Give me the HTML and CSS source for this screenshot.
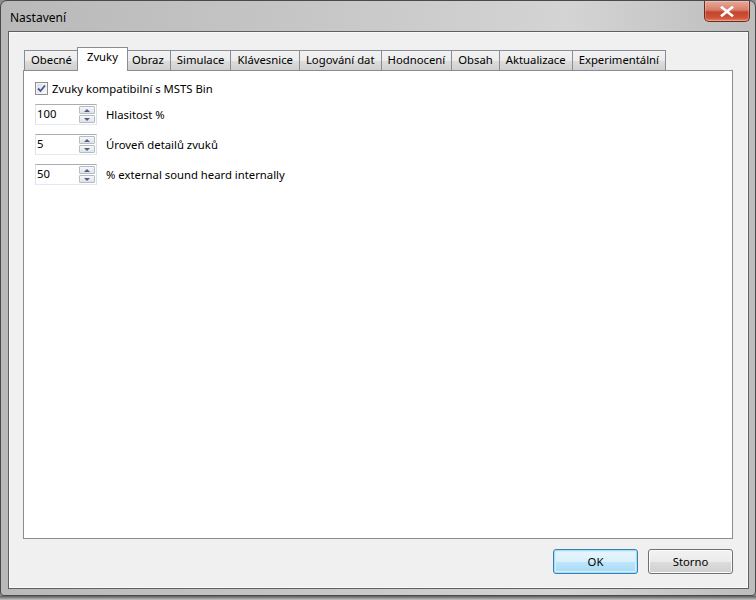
FILE: index.html
```html
<!DOCTYPE html>
<html lang="cs">
<head>
<meta charset="utf-8">
<title>Nastavení</title>
<link rel="stylesheet" href="styles.css">
</head>
<body>
<div class="window">
  <div class="titlebar">
    <span class="title">Nastavení</span>
    <div class="close" aria-label="Zavřít">
      <svg width="14" height="11" viewBox="0 0 14 11"><path d="M2 1.5 L12 9.5 M12 1.5 L2 9.5" stroke="#fff" stroke-width="2.6" stroke-linecap="square"/><path d="M2 1.5 L12 9.5 M12 1.5 L2 9.5" stroke="#fff" stroke-width="1.2"/></svg>
    </div>
  </div>
  <div class="client">
    <div class="tabcontrol">
      <div class="tabs">
        <div class="tab">Obecné</div>
        <div class="tab active">Zvuky</div>
        <div class="tab">Obraz</div>
        <div class="tab">Simulace</div>
        <div class="tab">Klávesnice</div>
        <div class="tab">Logování dat</div>
        <div class="tab">Hodnocení</div>
        <div class="tab">Obsah</div>
        <div class="tab">Aktualizace</div>
        <div class="tab">Experimentální</div>
      </div>
      <div class="panel">
        <label class="check-row">
          <span class="checkbox">
            <svg width="9" height="9" viewBox="0 0 9 9"><path d="M1 4.5 L3.5 7 L8 1.5" fill="none" stroke="#3c5a9a" stroke-width="1.8"/></svg>
          </span>
          <span>Zvuky kompatibilní s MSTS Bin</span>
        </label>
        <div class="num-row">
          <div class="spinner"><span class="value">100</span><span class="spin"><span class="up"></span><span class="down"></span></span></div>
          <span class="label">Hlasitost %</span>
        </div>
        <div class="num-row">
          <div class="spinner"><span class="value">5</span><span class="spin"><span class="up"></span><span class="down"></span></span></div>
          <span class="label">Úroveň detailů zvuků</span>
        </div>
        <div class="num-row">
          <div class="spinner"><span class="value">50</span><span class="spin"><span class="up"></span><span class="down"></span></span></div>
          <span class="label">% external sound heard internally</span>
        </div>
      </div>
    </div>
    <div class="buttons">
      <button class="btn default">OK</button>
      <button class="btn">Storno</button>
    </div>
  </div>
</div>
<div class="behind"></div>
</body>
</html>
```
FILE: styles.css
```css
html, body {
  margin: 0;
  padding: 0;
}
body {
  width: 756px;
  height: 600px;
  overflow: hidden;
  background: #8d8d8d;
  font-family: "Noto Sans", "Open Sans", sans-serif;
  font-size: 11.3px;
  color: #000;
}
.window {
  box-sizing: border-box;
  width: 756px;
  height: 596px;
  border: 1px solid #4a4a4a;
  border-radius: 7px 7px 4px 4px;
  background: linear-gradient(to right, #b9b9b9 0%, #c6c6c6 40%, #d4d4d4 75%, #bdbdbd 100%);
  display: flex;
  flex-direction: column;
  padding: 0 6px 6px 7px;
}
.titlebar {
  height: 30px;
  display: flex;
  align-items: flex-start;
  justify-content: space-between;
}
.title {
  margin-top: 8px;
  margin-left: 2px;
  font-size: 12px;
}
.close {
  width: 46px;
  height: 21px;
  margin-right: -1px;
  box-sizing: border-box;
  border: 1px solid #6a2a1e;
  border-top: none;
  border-radius: 0 0 5px 5px;
  background: linear-gradient(to bottom, #e7a999 0%, #d77d6a 45%, #c4452e 55%, #d0533b 85%, #e58a6a 100%);
  display: flex;
  align-items: center;
  justify-content: center;
  box-shadow: inset 0 0 0 1px rgba(255,255,255,0.25);
}
.client {
  flex: 1;
  box-sizing: border-box;
  border: 1px solid #5f5f5f;
  background: #f0f0f0;
  padding: 15px 15px 0 14px;
  display: flex;
  flex-direction: column;
  box-shadow: inset 0 0 0 1px #fafafa;
}
.tabcontrol {
  display: flex;
  flex-direction: column;
  height: 492px;
}
.tabs {
  display: flex;
  align-items: flex-end;
  height: 23px;
  padding-left: 1px;
  position: relative;
  z-index: 1;
}
.tab {
  height: 20px;
  box-sizing: border-box;
  border: 1px solid #898c95;
  border-bottom: none;
  margin-left: -1px;
  padding: 1px 6px 0;
  background: linear-gradient(to bottom, #f3f3f3 0%, #ebebeb 50%, #dddddd 51%, #cfcfcf 100%);
  white-space: nowrap;
  line-height: 16px;
}
.tab:first-child {
  margin-left: 0;
}
.tab.active {
  height: 24px;
  margin-bottom: -1px;
  background: #fff;
  padding: 1px 9px 0;
  margin-left: -2px;
  margin-right: -2px;
  position: relative;
  z-index: 2;
}
.panel {
  flex: 1;
  border: 1px solid #898c95;
  background: #fff;
  padding: 10px 0 0 11px;
  display: flex;
  flex-direction: column;
}
.check-row {
  display: flex;
  align-items: center;
  gap: 4px;
  height: 14px;
}
.checkbox {
  width: 11px;
  height: 11px;
  border: 1px solid #8f8f8f;
  background: linear-gradient(135deg, #dcdcdc, #fbfbfb);
  display: flex;
  align-items: center;
  justify-content: center;
  box-shadow: inset 0 0 0 1px #f4f4f4;
}
.num-row {
  display: flex;
  align-items: center;
  gap: 9px;
  margin-top: 9px;
}
.check-row + .num-row {
  margin-top: 9px;
}
.spinner {
  width: 62px;
  height: 21px;
  box-sizing: border-box;
  border: 1px solid #abadb3;
  border-color: #abadb3 #dbdfe6 #e3e9ef #e2e3ea;
  background: #fff;
  display: flex;
  justify-content: space-between;
  align-items: stretch;
}
.value {
  padding-left: 1px;
  line-height: 17px;
}
.spin {
  width: 16px;
  display: flex;
  flex-direction: column;
  padding: 1px 1px 1px 0;
  gap: 1px;
}
.spin span {
  flex: 1;
  border: 1px solid #b5bcc6;
  border-radius: 1px;
  background: linear-gradient(to bottom, #f6f7f9, #dfe3e8);
  position: relative;
}
.spin .up::after,
.spin .down::after {
  content: "";
  position: absolute;
  left: 4px;
  top: 2px;
  border-left: 3px solid transparent;
  border-right: 3px solid transparent;
}
.spin .up::after {
  border-bottom: 3px solid #4d6185;
}
.spin .down::after {
  border-top: 3px solid #4d6185;
}
.buttons {
  display: flex;
  justify-content: flex-end;
  gap: 10px;
  margin-top: 10px;
}
.btn {
  width: 85px;
  height: 25px;
  box-sizing: border-box;
  border: 1px solid #707070;
  border-radius: 3px;
  background: linear-gradient(to bottom, #f2f2f2 0%, #ebebeb 50%, #dddddd 51%, #cfcfcf 100%);
  font-family: inherit;
  font-size: 11.3px;
  color: #000;
  box-shadow: inset 0 0 0 1px #fbfbfb;
  padding: 0;
}
.btn.default {
  border-color: #3c7fb1;
  box-shadow: inset 0 0 0 1px #9ee1f8, inset 0 0 0 2px #d5eefa;
  background: linear-gradient(to bottom, #eaf6fd 0%, #d9f0fc 50%, #bee6fd 51%, #a7d9f5 100%);
}
.behind {
  height: 4px;
  background: linear-gradient(to bottom, #5b5b5b, #c4c4c4);
}
```
